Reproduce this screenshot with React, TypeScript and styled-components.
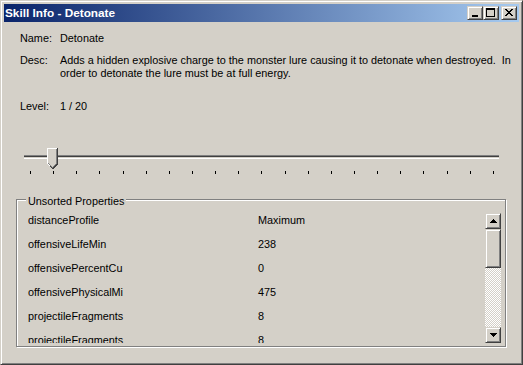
import { FC } from 'react';
import styled, { createGlobalStyle, css } from 'styled-components';

const FACE = '#d4d0c8';

const GlobalStyle = createGlobalStyle`
  html, body {
    margin: 0;
    padding: 0;
    background: ${FACE};
  }
  body {
    font-family: 'Liberation Sans', Arial, sans-serif;
    font-size: 10.85px;
    color: #000;
  }
`;

const raised = css`
  box-sizing: border-box;
  background: ${FACE};
  border: 1px solid;
  border-color: ${FACE} #404040 #404040 ${FACE};
  box-shadow: inset 1px 1px 0 #fff, inset -1px -1px 0 #808080;
`;

const properties = [
  { name: 'distanceProfile', value: 'Maximum' },
  { name: 'offensiveLifeMin', value: '238' },
  { name: 'offensivePercentCu', value: '0' },
  { name: 'offensivePhysicalMi', value: '475' },
  { name: 'projectileFragments', value: '8' },
  { name: 'projectileFragments', value: '8' },
];

const TICKS = 21;

// pixel glyphs as [x, y, w, h] rects
const closeGlyph = [
  [0, 0, 2, 1], [6, 0, 2, 1],
  [1, 1, 2, 1], [5, 1, 2, 1],
  [2, 2, 4, 1],
  [3, 3, 2, 1],
  [2, 4, 4, 1],
  [1, 5, 2, 1], [5, 5, 2, 1],
  [0, 6, 2, 1], [6, 6, 2, 1],
];

const Pixels: FC<{ rects: number[][]; w: number; h: number }> = ({ rects, w, h }) => (
  <svg width={w} height={h} viewBox={`0 0 ${w} ${h}`} shapeRendering="crispEdges">
    {rects.map(([x, y, rw, rh], i) => (
      <rect key={i} x={x} y={y} width={rw} height={rh} fill="#000" />
    ))}
  </svg>
);

const Arrow: FC<{ down?: boolean }> = ({ down }) => {
  const rows = [1, 3, 5, 7];
  const ordered = down ? [...rows].reverse() : rows;
  return (
    <Pixels
      w={7}
      h={4}
      rects={ordered.map((width, y) => [(7 - width) / 2, y, width, 1])}
    />
  );
};

export default function App() {
  return (
    <>
      <GlobalStyle />
      <Window>
        <TitleBar>
          <Title>Skill Info - Detonate</Title>
          <TitleButtons>
            <TitleButton aria-label="Minimize">
              <Pixels w={6} h={2} rects={[[0, 0, 6, 2]]} />
            </TitleButton>
            <TitleButton aria-label="Maximize">
              <Pixels
                w={9}
                h={9}
                rects={[[0, 0, 9, 2], [0, 0, 1, 9], [8, 0, 1, 9], [0, 8, 9, 1]]}
              />
            </TitleButton>
            <CloseButton aria-label="Close">
              <Pixels w={8} h={7} rects={closeGlyph} />
            </CloseButton>
          </TitleButtons>
        </TitleBar>

        <Body>
          <InfoRow $gap={10}>
            <Label>Name:</Label>
            <span>Detonate</span>
          </InfoRow>
          <InfoRow $gap={9}>
            <Label>Desc:</Label>
            <Desc>
              <span>Adds a hidden explosive charge to the monster lure causing it to detonate when destroyed.  In</span>
              <span>order to detonate the lure must be at full energy.</span>
            </Desc>
          </InfoRow>
          <InfoRow $gap={20}>
            <Label>Level:</Label>
            <span>1 / 20</span>
          </InfoRow>

          <Slider>
            <Channel>
              <Track />
              <Thumb width="11" height="22" viewBox="0 0 11 22" shapeRendering="crispEdges">
                <polygon points="0,0 11,0 11,16 5.5,21.5 0,16" fill="#404040" />
                <polygon points="0,0 10,0 10,15.5 5.5,20 0,15.5" fill="#fff" />
                <polygon points="1,1 10,1 10,15.5 5.5,20 1,15.5" fill="#808080" />
                <polygon points="1,1 9,1 9,15 5.5,18.5 1,15" fill={FACE} />
              </Thumb>
            </Channel>
            <TickRow>
              {Array.from({ length: TICKS }).map((_, i) => (
                <Tick key={i} />
              ))}
            </TickRow>
          </Slider>

          <GroupBox>
            <Legend>Unsorted Properties</Legend>
            <PropertyList>
              {properties.map((p, i) => (
                <PropertyRow key={i}>
                  <span>{p.name}</span>
                  <span>{p.value}</span>
                </PropertyRow>
              ))}
            </PropertyList>
            <ScrollBar>
              <ScrollButton>
                <Arrow />
              </ScrollButton>
              <ScrollThumb />
              <ScrollTrack />
              <ScrollButton>
                <Arrow down />
              </ScrollButton>
            </ScrollBar>
          </GroupBox>
        </Body>
      </Window>
    </>
  );
}

const Window = styled.div`
  box-sizing: border-box;
  width: 523px;
  height: 365px;
  padding: 3px;
  background: ${FACE};
  border: 1px solid;
  border-color: ${FACE} #404040 #404040 ${FACE};
  box-shadow: inset 1px 1px 0 #fff, inset -1px -1px 0 #808080;
  display: flex;
  flex-direction: column;
`;

const TitleBar = styled.div`
  height: 18px;
  display: flex;
  align-items: center;
  justify-content: space-between;
  padding: 0 2px 0 1px;
  background: linear-gradient(90deg, #0a246a, #a6caf0);
`;

const Title = styled.span`
  color: #fff;
  font-weight: bold;
  font-size: 11.8px;
  line-height: 13px;
`;

const TitleButtons = styled.div`
  display: flex;
  align-items: center;
`;

const TitleButton = styled.div`
  ${raised};
  width: 16px;
  height: 14px;
  display: flex;
  align-items: center;
  justify-content: center;

  &:first-child svg {
    margin-top: 6px;
    margin-left: -1px;
  }
  &:nth-child(2) svg {
    margin-left: -1px;
    margin-top: -1px;
  }
`;

const CloseButton = styled(TitleButton)`
  margin-left: 2px;
  svg {
    margin-left: -1px;
    margin-top: -1px;
  }
`;

const Body = styled.div`
  flex: 1;
  display: flex;
  flex-direction: column;
  padding: 0 12px;
  line-height: 13px;
`;

const InfoRow = styled.div<{ $gap: number }>`
  display: flex;
  margin-top: ${(p) => p.$gap}px;
  padding-left: 4px;
`;

const Label = styled.span`
  width: 40px;
  flex: none;
`;

const Desc = styled.div`
  display: flex;
  flex-direction: column;
  white-space: pre;
`;

const Slider = styled.div`
  margin: 35px 0 0 8px;
  width: 475px;
  display: flex;
  flex-direction: column;
`;

const Channel = styled.div`
  position: relative;
  height: 23px;
`;

const Track = styled.div`
  margin-top: 7px;
  height: 4px;
  box-sizing: border-box;
  border-top: 1px solid #808080;
  border-bottom: 1px solid #fff;
  background: linear-gradient(#404040 50%, ${FACE} 50%);
`;

const Thumb = styled.svg`
  position: absolute;
  left: 23px;
  top: 0;
`;

const TickRow = styled.div`
  display: flex;
  justify-content: space-between;
  padding: 0 5px 0 6px;
`;

const Tick = styled.div`
  width: 1px;
  height: 3px;
  background: #000;
`;

const GroupBox = styled.div`
  position: relative;
  margin-top: 25px;
  width: 490px;
  height: 148px;
  box-sizing: border-box;
  border: 1px solid #808080;
  box-shadow: 1px 1px 0 #fff, inset 1px 1px 0 #fff;
  padding: 13px 4px 3px 3px;
  display: flex;
`;

const Legend = styled.span`
  position: absolute;
  top: -5px;
  left: 9px;
  padding: 0 2px;
  background: ${FACE};
`;

const PropertyList = styled.div`
  flex: 1;
  height: 130px;
  padding-top: 1px;
  box-sizing: border-box;
  overflow: hidden;
`;

const PropertyRow = styled.div`
  display: grid;
  grid-template-columns: 230px 1fr;
  height: 24px;
  padding-left: 8px;
  white-space: nowrap;
`;

const ScrollBar = styled.div`
  width: 16px;
  height: 130px;
  display: flex;
  flex-direction: column;
`;

const ScrollButton = styled.div`
  ${raised};
  height: 16px;
  display: flex;
  align-items: center;
  justify-content: center;
`;

const ScrollThumb = styled.div`
  ${raised};
  height: 39px;
`;

const ScrollTrack = styled.div`
  flex: 1;
  background: repeating-conic-gradient(#fff 0% 25%, ${FACE} 0% 50%) 0 0 / 2px 2px;
`;
